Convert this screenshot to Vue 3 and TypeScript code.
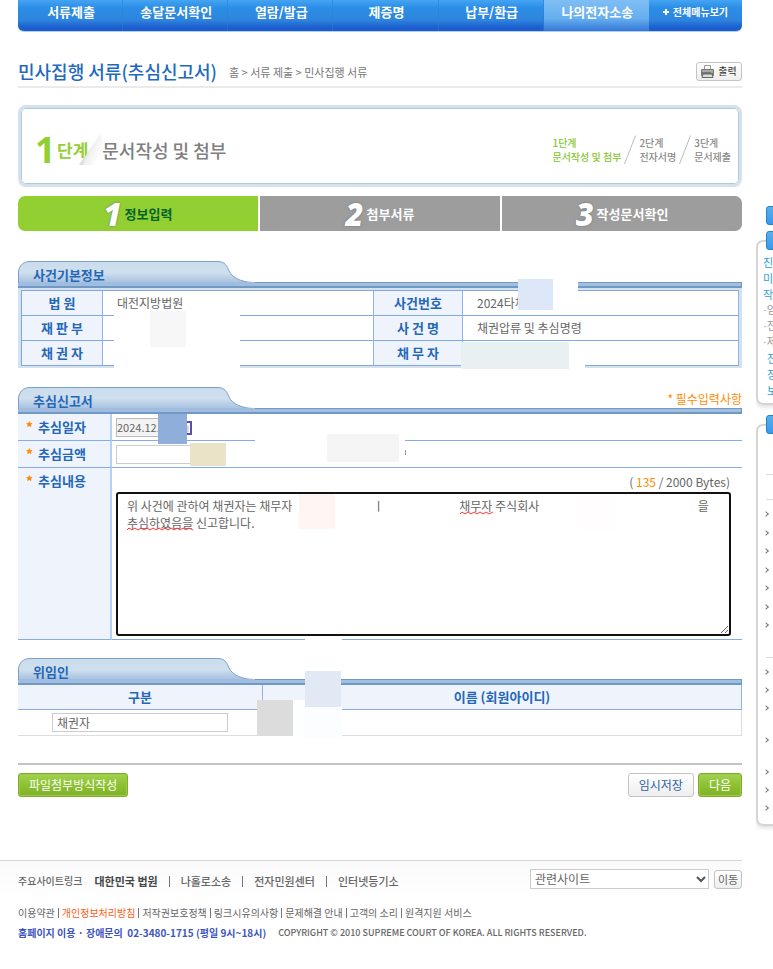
<script setup lang="ts">
import { ref } from 'vue'

const menus: string[] = ['서류제출', '송달문서확인', '열람/발급', '제증명', '납부/환급', '나의전자소송']
const activeMenu = '나의전자소송'

interface Stage { no: string; name: string }
const stages: Stage[] = [
  { no: '1단계', name: '문서작성 및 첨부' },
  { no: '2단계', name: '전자서명' },
  { no: '3단계', name: '문서제출' },
]
const wizard: Stage[] = [
  { no: '1', name: '정보입력' },
  { no: '2', name: '첨부서류' },
  { no: '3', name: '작성문서확인' },
]

const gap = (n: number): string => '\u00a0'.repeat(n)
const date = ref('2024.12.')
const amount = ref('')
const content = ref(
  `위 사건에 관하여 채권자는 채무자${gap(30)}ㅣ${gap(28)}채무자 주식회사${gap(59)}을\n추심하였음을 신고합니다.`,
)
const principal = ref('채권자')

const sites: string[] = ['대한민국 법원', '나홀로소송', '전자민원센터', '인터넷등기소']
const policies: string[] = ['이용약관', '개인정보처리방침', '저작권보호정책', '링크시유의사항', '문제해결 안내', '고객의 소리', '원격지원 서비스']

const tabShape = 'M0.5 28V11C1 5 5 .5 12 .5H200C207 .5 209 5 211 10C214 17 225 21.5 236 21.5H250V28Z'
</script>

<template>
  <div class="page">
    <div class="column">
      <main class="main">
        <nav class="gnb">
          <a v-for="m in menus" :key="m" href="#" :class="{ on: m === activeMenu }">{{ m }}</a>
          <a href="#" class="all">
            <svg width="6" height="6" viewBox="0 0 6 6"><path d="M2 0h2v2h2v2H4v2H2V4H0V2h2z" fill="#fff" /></svg>
            전체메뉴보기
          </a>
        </nav>

        <div class="title-row">
          <h1>민사집행 서류(추심신고서)</h1>
          <span class="crumb">홈 &gt; 서류 제출 &gt; 민사집행 서류</span>
          <button type="button" class="grey-btn print">
            <svg width="13" height="13" viewBox="0 0 13 13">
              <path d="M3.5 5V.5h6V5" fill="#fff" stroke="#999" />
              <rect x="0" y="4" width="13" height="7" rx="1" fill="#777" />
              <rect x="1" y="5" width="11" height="2" fill="#aaa" />
              <rect x="10" y="7" width="2" height="1" fill="#6c6" />
              <path d="M2 9h9l1 3.500H1z" fill="#ddd" stroke="#666" />
            </svg>
            출력
          </button>
        </div>

        <div class="stage-box">
          <div class="stage-now">
            <span class="num">1</span>
            <span class="unit">단계</span>
            <svg class="fold" width="28" height="36" viewBox="0 0 28 36">
              <defs>
                <linearGradient id="foldShade" x1="0.35" y1="0.4" x2="0.85" y2="0.7">
                  <stop offset="0" stop-color="#cfcfcf" />
                  <stop offset="0.3" stop-color="#f0f0f0" />
                  <stop offset="1" stop-color="#fff" />
                </linearGradient>
              </defs>
              <path d="M23 1L26 16 22 33H1z" fill="url(#foldShade)" />
            </svg>
            <span class="name">문서작성 및 첨부</span>
          </div>
          <ol class="stage-list">
            <li v-for="(s, i) in stages" :key="s.no" :class="{ on: i === 0 }">
              <svg v-if="i > 0" width="12" height="30" viewBox="0 0 12 30"><path d="M11.500.500.500 29" stroke="#bbb" fill="none" /></svg>
              <span>{{ s.no }}<br />{{ s.name }}</span>
            </li>
          </ol>
        </div>

        <ol class="wizard">
          <li v-for="(w, i) in wizard" :key="w.no" :class="{ on: i === 0 }"><em>{{ w.no }}</em>{{ w.name }}</li>
        </ol>

        <svg class="defs" width="0" height="0">
          <defs>
            <linearGradient id="tabFill" x1="0" y1="0" x2="0" y2="1">
              <stop offset="0" stop-color="#cadcec" />
              <stop offset="0.4" stop-color="#cfdfee" />
              <stop offset="0.8" stop-color="#a3bfdf" />
              <stop offset="1" stop-color="#9dbbdd" />
            </linearGradient>
          </defs>
        </svg>

        <section class="case">
          <div class="head">
            <svg width="250" height="27" viewBox="0 0 250 27"><path :d="tabShape" fill="url(#tabFill)" stroke="#7ba1ca" /></svg>
            <h2>사건기본정보</h2>
          </div>
          <div class="frame">
            <table class="info">
              <colgroup><col class="c1" /><col /><col class="c3" /><col class="c4" /></colgroup>
              <tbody>
                <tr><th scope="row">법 원</th><td>대전지방법원</td><th scope="row">사건번호</th><td>2024타채</td></tr>
                <tr><th scope="row">재 판 부</th><td></td><th scope="row">사 건 명</th><td>채권압류 및 추심명령</td></tr>
                <tr><th scope="row">채 권 자</th><td></td><th scope="row">채 무 자</th><td></td></tr>
              </tbody>
            </table>
          </div>
          <i class="mask a1"></i><i class="mask a2"></i><i class="mask a3"></i>
          <i class="mask a4"></i><i class="mask a5"></i><i class="mask a6"></i>
        </section>

        <section class="report">
          <div class="head">
            <svg width="250" height="27" viewBox="0 0 250 27"><path :d="tabShape" fill="url(#tabFill)" stroke="#7ba1ca" /></svg>
            <h2>추심신고서</h2>
            <span class="note">* 필수입력사항</span>
          </div>
          <table class="form">
            <colgroup><col class="f1" /><col /></colgroup>
            <tbody>
              <tr>
                <th scope="row"><label for="date"><b>*</b>추심일자</label></th>
                <td>
                  <div class="line">
                    <input id="date" v-model="date" class="date" type="text" readonly />
                    <svg width="14" height="15" viewBox="0 0 14 15">
                      <path d="M1 2h12v12H1z" fill="#fff" stroke="#5a4fae" stroke-width="2" />
                      <path d="M3 6h7v6H3zM6.500 6v6M3 9h7" fill="none" stroke="#bbb" />
                    </svg>
                  </div>
                </td>
              </tr>
              <tr>
                <th scope="row"><label for="amount"><b>*</b>추심금액</label></th>
                <td><div class="line"><input id="amount" v-model="amount" class="amount" type="text" /></div></td>
              </tr>
              <tr class="tall">
                <th scope="row"><label for="content"><b>*</b>추심내용</label></th>
                <td>
                  <p class="bytes">( <strong>135</strong> / 2000 Bytes)</p>
                  <div class="editor">
                    <textarea id="content" v-model="content" spellcheck="false"></textarea>
                    <svg class="wave w1" width="66" height="4" viewBox="0 0 66 4"><path d="M0 3 2 1 5 3 8 1 11 3 14 1 17 3 20 1 23 3 26 1 29 3 32 1 35 3 38 1 41 3 44 1 47 3 50 1 53 3 56 1 59 3 62 1 66 3" /></svg>
                    <svg class="wave w2" width="33" height="4" viewBox="0 0 33 4"><path d="M0 3 2 1 5 3 8 1 11 3 14 1 17 3 20 1 23 3 26 1 29 3 33 1" /></svg>
                  </div>
                </td>
              </tr>
            </tbody>
          </table>
          <i class="mask b1"></i><i class="mask b2"></i><i class="mask b3"></i><i class="mask b4"></i>
          <i class="mask b5"></i><i class="mask b6"></i><i class="mask b7"></i><i class="mask b8"></i>
        </section>

        <section class="grantor">
          <div class="head">
            <svg width="250" height="27" viewBox="0 0 250 27"><path :d="tabShape" fill="url(#tabFill)" stroke="#7ba1ca" /></svg>
            <h2>위임인</h2>
          </div>
          <table class="list">
            <colgroup><col class="g1" /><col /></colgroup>
            <thead><tr><th id="kind" scope="col">구분</th><th scope="col">이름 (회원아이디)</th></tr></thead>
            <tbody><tr><td><input v-model="principal" type="text" aria-labelledby="kind" /></td><td></td></tr></tbody>
          </table>
          <i class="mask c1"></i><i class="mask c2"></i><i class="mask c3"></i><i class="mask c4"></i><i class="mask c5"></i>
        </section>

        <div class="actions">
          <button type="button" class="green">파일첨부방식작성</button>
          <button type="button" class="white">임시저장</button>
          <button type="button" class="green">다음</button>
        </div>
      </main>

      <footer class="footer">
        <div class="sites">
          <span class="label">주요사이트링크</span>
          <ul>
            <li v-for="s in sites" :key="s"><a href="#">{{ s }}</a></li>
          </ul>
          <div class="jump">
            <div class="select">
              <select aria-label="관련사이트"><option>관련사이트</option></select>
              <svg width="10" height="7" viewBox="0 0 10 7"><path d="M1 1l4 4 4-4" fill="none" stroke="#555" stroke-width="2" /></svg>
            </div>
            <button type="button" class="grey-btn go">이동</button>
          </div>
        </div>
        <ul class="policies">
          <li v-for="(p, i) in policies" :key="p" :class="{ hot: i === 1 }"><a href="#">{{ p }}</a></li>
        </ul>
        <p class="legal">
          <span class="tel">홈페이지 이용 · 장애문의&nbsp; 02-3480-1715 (평일 9시~18시)</span>
          <span class="copy">COPYRIGHT © 2010 SUPREME COURT OF KOREA. ALL RIGHTS RESERVED.</span>
        </p>
      </footer>
    </div>

    <aside class="side">
      <div class="chip"></div>
      <div class="panel guide">
        <div class="chip"></div>
        <div class="texts">
          <p class="blue">진<br />미<br />작</p>
          <p class="dots">·임<br />·전<br />·제</p>
          <p class="blue in">전<br />정<br />보</p>
        </div>
      </div>
      <div class="panel quick">
        <div class="chip"></div>
        <ul class="first"><li v-for="n in 7" :key="n"></li></ul>
        <ul><li></li><li></li><li class="two"></li><li class="two"></li><li></li><li></li><li></li></ul>
      </div>
    </aside>
  </div>
</template>

<style>
body { margin: 0; background: #fff; overflow-x: hidden; }
</style>

<style scoped>
.page {
  display: flex;
  gap: 14px;
  min-height: 969px;
  overflow: hidden;
  font-family: "Noto Sans CJK KR", "Liberation Sans", sans-serif;
  font-size: 12px;
  line-height: 16px;
  color: #666;
}
.page *, .page *::before, .page *::after { box-sizing: border-box; }
h1, h2, p, ol, ul { margin: 0; padding: 0; list-style: none; }
.page a { color: inherit; text-decoration: none; }
.page button, .page input, .page textarea, .page select { font: inherit; color: inherit; margin: 0; }
.column { flex: 1; min-width: 0; }
.main { padding-left: 18px; }

.gnb {
  display: grid;
  grid-template-columns: repeat(6, 105fr) 93fr;
  height: 32px;
  border-radius: 0 0 6px 6px;
  border-bottom: 1px solid #b4cdf2;
  background: linear-gradient(#45a4f2 0, #2b8ee6 25%, #2e84dc 65%, #1c5fd0 88%, #1b5ccb 100%);
  overflow: hidden;
}
.gnb a {
  display: flex;
  align-items: center;
  justify-content: center;
  padding-bottom: 7px;
  padding-left: 2px;
  font-size: 13px;
  font-weight: 700;
  color: #fff;
  white-space: nowrap;
  border-right: 1px dotted #2f7dd0;
}
.gnb a.on { background: linear-gradient(#7fbef5, #66aeee 60%, #3478d8); border-right: 0; }
.gnb a.all { gap: 4px; font-size: 10px; border-right: 0; padding-left: 0; }

.title-row {
  display: flex;
  align-items: center;
  gap: 12px;
  margin-top: 24px;
  height: 32px;
  border-bottom: 2px solid #ebebeb;
}
h1 { font-size: 18px; line-height: 24px; font-weight: 500; color: #1f69c0; }
.crumb { font-size: 11px; color: #777; padding-top: 2px; }
.grey-btn {
  display: flex;
  align-items: center;
  justify-content: center;
  gap: 4px;
  height: 19px;
  padding: 0;
  border: 1px solid #c4c4c4;
  border-radius: 3px;
  background: linear-gradient(#fff, #eee);
}
.page .print { margin-left: auto; width: 46px; font-size: 10px; color: #333; }

.stage-box {
  display: flex;
  align-items: center;
  justify-content: space-between;
  margin-top: 17px;
  height: 82px;
  padding: 7px 8px 0 14px;
  border: 3px solid #d5e2ec;
  border-radius: 8px;
  box-shadow: inset 0 0 0 1px #a9cce2;
  background: #fff;
}
.stage-now { display: flex; align-items: center; color: #808080; }
.stage-now .num { font: 700 36px/36px "Open Sans", sans-serif; color: #92cf33; width: 22px; }
.stage-now .unit { font-size: 17px; font-weight: 700; line-height: 24px; color: #92cf33; }
.fold { margin-left: -10px; margin-right: -4px; }
.stage-now .name { font-size: 18px; font-weight: 500; line-height: 24px; }
.stage-list { display: flex; font-size: 10px; font-weight: 500; line-height: 14px; color: #8a8a8a; }
.stage-list li { display: flex; align-items: center; gap: 3px; padding-left: 3px; }
.stage-list .on { color: #86c82e; }

.wizard { display: grid; grid-template-columns: repeat(3, 1fr); gap: 2px; margin-top: 9px; }
.wizard li {
  display: flex;
  align-items: center;
  justify-content: center;
  gap: 3px;
  height: 35px;
  font-size: 13px;
  font-weight: 700;
  color: #fff;
  background: #9d9d9d;
}
.wizard li:first-child { border-radius: 7px 0 0 7px; }
.wizard li:last-child { border-radius: 0 7px 7px 0; }
.wizard .on { background: #92cf33; color: #05642a; }
.wizard em { font: italic 800 31px/34px "Open Sans", sans-serif; color: #fff; text-shadow: 0 0 2px #666; }

.defs { display: block; }
section { position: relative; }
.case { margin-top: 30px; }
.report { margin-top: 19px; }
.grantor { margin-top: 18px; }
.head {
  position: relative;
  display: flex;
  justify-content: space-between;
  height: 27px;
  padding: 6px 0 0 15px;
}
.head::after {
  content: "";
  position: absolute;
  left: 0;
  right: 0;
  bottom: 0;
  height: 6px;
  border: 1px solid #7199c6;
  border-left: 0;
  background: #a3bfdf;
  border-bottom-width: 2px;
}
.head::before {
  content: "";
  position: absolute;
  z-index: 1;
  left: 1px;
  width: 236px;
  bottom: 2px;
  height: 4px;
  background: #a0bddf;
}
.head svg { position: absolute; left: 0; top: 0; }
h2 { position: relative; z-index: 2; font-size: 13px; line-height: 16px; font-weight: 700; color: #2467b8; }
.note { color: #ff8c00; line-height: 12px; }

table { width: 100%; border-collapse: separate; border-spacing: 0; table-layout: fixed; }
th { font-size: 13px; font-weight: 700; color: #2467b8; background: #eff4fc; padding: 0; }
td { padding: 0; }
.frame { padding: 2px 3px; background: #d5e2ec; }
.info { border-top: 1px solid #7fa8e6; border-left: 1px solid #7fa8e6; background: #fff; }
.info th, .info td { height: 25px; border-right: 1px solid #8fb3ec; border-bottom: 1px solid #7fa8e6; }
.info td { padding-left: 14px; }
.c1 { width: 81px; }
.c3 { width: 89px; }
.c4 { width: 276px; }

.f1 { width: 94px; }
.form th, .form td { height: 27px; border-bottom: 1px solid #85ace6; }
.form th { text-align: left; border-right: 2px solid #b8cff5; padding-left: 8px; vertical-align: top; }
.form label { display: block; padding-top: 5px; }
.form label b { display: inline-block; width: 12px; color: #ff8c00; }
.form td { padding-left: 4px; vertical-align: top; }
.form .tall th, .form .tall td { height: 172px; }
.line { display: flex; align-items: center; height: 26px; }
.page input { height: 19px; padding: 0 2px; border: 1px solid #ccc; background: #fff; line-height: 16px; outline: 0; }
.page .date { width: 60px; padding: 0; font-size: 11px; background: #f3f3f3; border-color: #bbb; }
.date + svg { margin-left: 2px; }
.page .amount { width: 110px; }
.bytes { padding: 5px 12px 2px 0; text-align: right; line-height: 17px; }
.bytes strong { font-weight: 400; color: #ff8c00; }
.editor { position: relative; margin-right: 11px; }
.page textarea {
  display: block;
  width: 100%;
  height: 144px;
  padding: 3px 9px;
  border: 2px solid #111;
  border-radius: 3px;
  outline: 0;
  line-height: 17px;
  background: #fff;
  resize: both;
}
.wave { position: absolute; fill: none; stroke: #f33; }
.w1 { left: 11px; top: 35px; }
.w2 { left: 344px; top: 19px; }

.g1 { width: 245px; }
.list th { height: 25px; border-right: 1px solid #8fb3ec; border-bottom: 1px solid #85ace6; }
.list td { height: 26px; border-bottom: 1px solid #ddd; padding-left: 34px; }
.list td:last-child { border-right: 1px solid #ddd; }
.page .list input { display: block; width: 176px; padding-left: 4px; }

.mask { position: absolute; background: #fff; z-index: 3; }
.a1 { left: 96px; top: 50px; width: 126px; height: 60px; }
.a2 { left: 132px; top: 50px; width: 36px; height: 36px; background: #f7f7f7; }
.a3 { left: 500px; top: 18px; width: 60px; height: 33px; }
.a4 { left: 500px; top: 18px; width: 35px; height: 31px; background: #dde7f7; }
.a5 { left: 443px; top: 81px; width: 124px; height: 28px; }
.a6 { left: 443px; top: 81px; width: 108px; height: 27px; background: #e9f0f2; }
.b1 { left: 140px; top: 27px; width: 29px; height: 30px; background: #90aeda; }
.b2 { left: 208px; top: 56px; width: 30px; height: 23px; }
.b3 { left: 172px; top: 56px; width: 36px; height: 23px; background: #ebe3c8; }
.b4 { left: 237px; top: 47px; width: 150px; height: 30px; }
.b5 { left: 309px; top: 47px; width: 72px; height: 28px; background: #f5f5f5; }
.b6 { left: 387px; top: 63px; width: 1px; height: 5px; background: #999; }
.b7 { left: 281px; top: 107px; width: 36px; height: 35px; background: #fff5f3; }
.b8 { left: 562px; top: 109px; width: 36px; height: 35px; background: #fffdfd; }
.c1.mask { left: 287px; top: -21px; width: 37px; height: 34px; }
.c2.mask { left: 287px; top: 13px; width: 36px; height: 36px; background: #e1e9f5; }
.c3.mask { left: 287px; top: 49px; width: 37px; height: 31px; background: #fcfdff; }
.c4.mask { left: 275px; top: 42px; width: 12px; height: 37px; background: #fdfefe; }
.c5.mask { left: 239px; top: 42px; width: 36px; height: 36px; background: #dcdcdc; }

.actions {
  display: flex;
  gap: 4px;
  align-items: center;
  margin-top: 27px;
  padding-top: 8px;
  border-top: 2px solid #c4c4c4;
}
.page .actions button { height: 24px; padding: 0 10px; border-radius: 3px; line-height: 16px; }
.page .actions .green { border: 1px solid #7fae2c; color: #fff; background: linear-gradient(#a4d153, #8cc22f 50%, #80b02b); box-shadow: inset 0 0 0 1px #9acb48; }
.page .actions .white { margin-left: auto; border: 1px solid #c4c4c4; color: #2b62a5; background: linear-gradient(#fff, #eee); }

.footer { margin-top: 63px; padding: 8px 0 0 18px; border-top: 1px solid #d5d5d5; background: linear-gradient(#fafafa, #fff 40px); }
.sites { display: flex; align-items: center; height: 20px; }
.sites .label { font-size: 10px; font-weight: 500; padding-top: 4px; }
.sites ul { display: flex; margin-left: 12px; padding-top: 4px; font-size: 11px; font-weight: 500; }
.sites li { display: flex; align-items: center; white-space: nowrap; }
.sites li:first-child { font-weight: 700; color: #444; }
.sites li + li::before { content: ""; width: 1px; height: 11px; margin: 0 11px; background: #777; }
.jump { display: flex; align-items: center; gap: 5px; margin-left: auto; }
.select { position: relative; }
.select svg { position: absolute; right: 3px; top: 7px; pointer-events: none; }
.page select { display: block; width: 179px; height: 20px; padding: 0 4px; border: 1px solid #ccc; border-radius: 0; background: #fff; appearance: none; line-height: 16px; }
.page .go { width: 28px; font-size: 11px; }
.policies { display: flex; margin-top: 16px; font-size: 10px; }
.policies li { display: flex; align-items: center; white-space: nowrap; }
.policies li + li::before { content: ""; width: 1px; height: 10px; margin: 0 3px; background: #777; }
.policies .hot a { color: #ff5a14; }
.legal { display: flex; align-items: center; gap: 12px; margin-top: 4px; font-size: 10px; white-space: nowrap; }
.tel { font-weight: 700; color: #4055c0; }
.copy { font-size: 9px; font-weight: 500; }

.side { flex: 0 0 17px; overflow: hidden; padding-top: 206px; }
.chip { width: 60px; height: 19px; margin-left: 10px; border: 1px solid #2585bd; border-radius: 3px; background: linear-gradient(#5ab0e8, #3c97ee); }
.panel { width: 80px; padding-left: 5px; border: 2px solid #d5d5d5; border-radius: 7px; box-shadow: 0 2px 4px #ddd; font-size: 11px; }
.panel .chip { position: relative; top: -11px; margin-left: 3px; }
.guide { margin-top: 15px; height: 165px; }
.texts { margin-top: -7px; color: #999; }
.guide .blue { color: #2fa0d8; }
.guide .in { padding-left: 4px; }
.guide .dots { font-family: "Liberation Sans", "Noto Sans CJK KR", sans-serif; }
.quick { margin-top: 19px; height: 402px; }
.quick ul { padding-top: 5px; margin-left: 3px; border-top: 1px solid #ddd; }
.quick .first {
  position: relative;
  display: flex;
  flex-direction: column;
  justify-content: space-between;
  height: 184px;
  margin-top: 28px;
  padding: 32px 0 23px;
  border-top: 0;
}
.first::before, .first::after { content: ""; position: absolute; left: 0; top: 1px; width: 60px; height: 1px; background: #ddd; }
.first::after { top: 26px; }
.quick li { display: flex; height: 18px; align-items: center; }
.quick li::before { content: ""; width: 4px; height: 4px; margin-left: -2px; border: solid #777; border-width: 1px 1px 0 0; transform: rotate(45deg); }
.quick .two { height: 32px; align-items: flex-start; padding-top: 7px; }
</style>
